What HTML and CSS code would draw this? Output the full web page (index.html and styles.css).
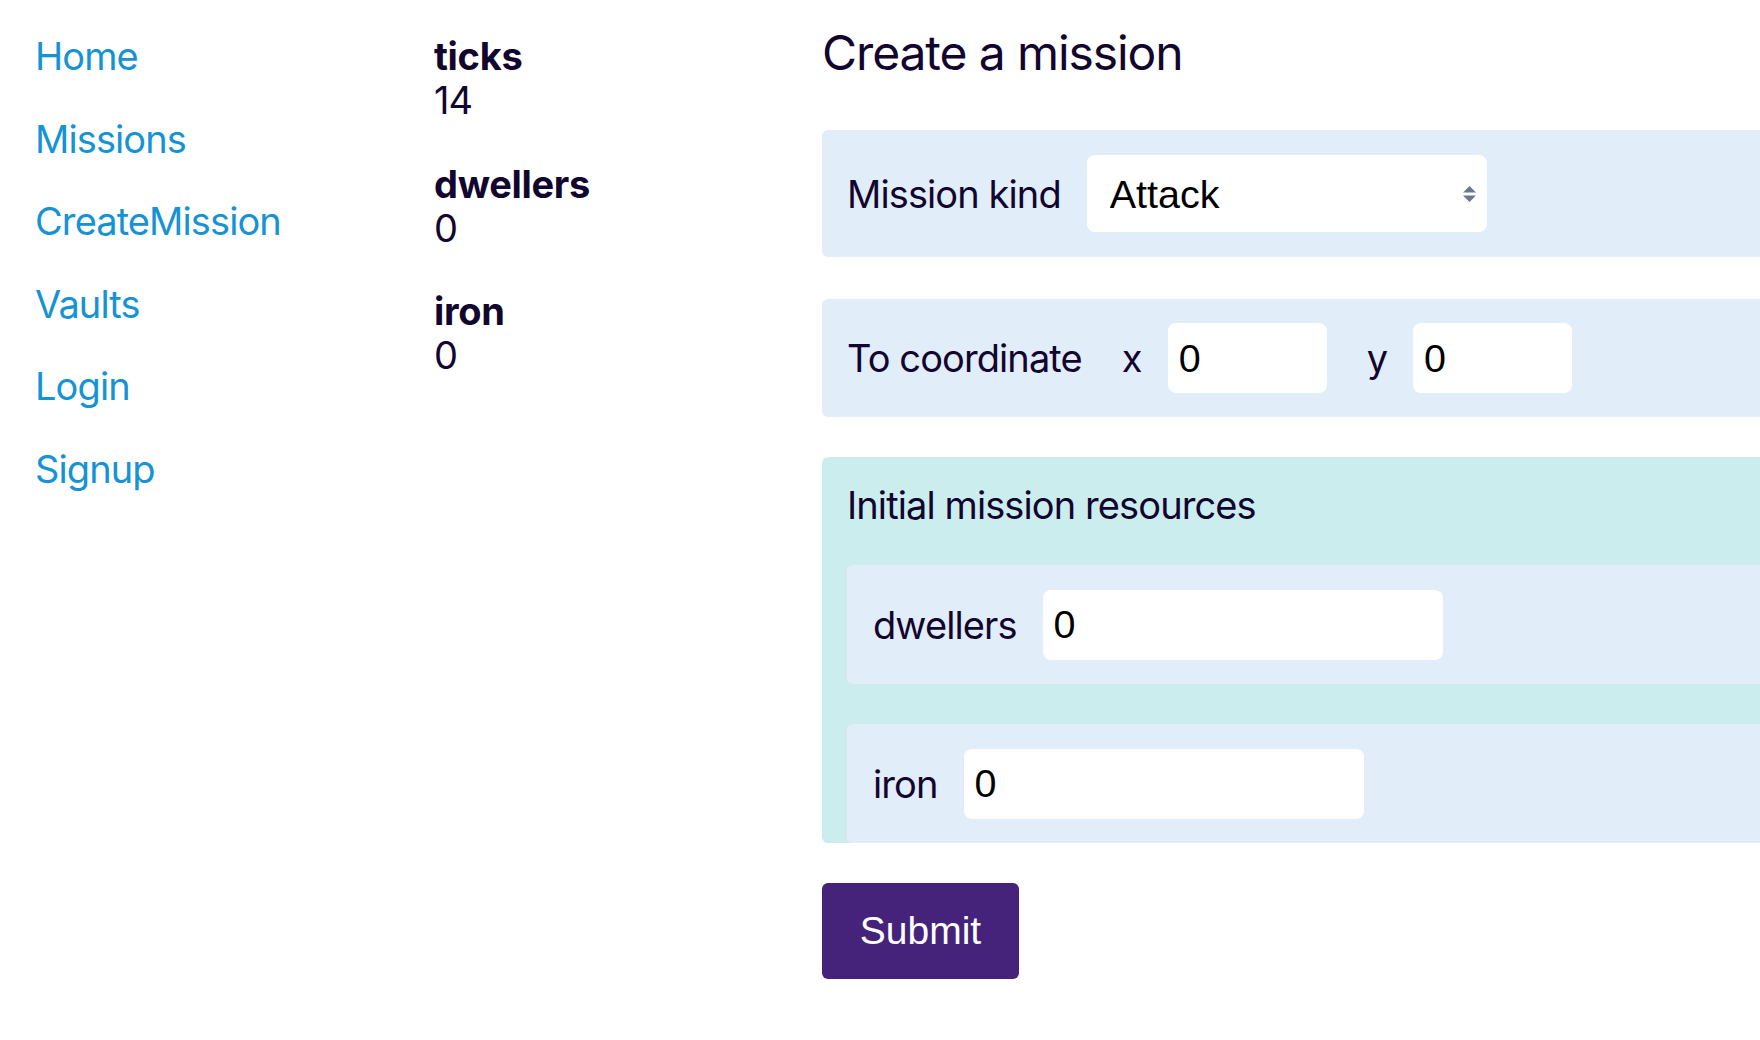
FILE: index.html
```html
<!DOCTYPE html>
<html lang="en">
<head>
<meta charset="utf-8">
<title>Create a mission</title>
<link rel="stylesheet" href="styles.css">
</head>
<body>
<div class="page">
  <nav class="nav">
    <a href="#">Home</a>
    <a href="#">Missions</a>
    <a href="#">CreateMission</a>
    <a href="#">Vaults</a>
    <a href="#">Login</a>
    <a href="#">Signup</a>
  </nav>
  <dl class="stats">
    <div class="stat"><dt>ticks</dt><dd>14</dd></div>
    <div class="stat"><dt>dwellers</dt><dd>0</dd></div>
    <div class="stat"><dt>iron</dt><dd>0</dd></div>
  </dl>
  <main class="main">
    <h1 class="title">Create a mission</h1>
    <form class="form">
      <div class="box row">
        <label class="label">Mission kind</label>
        <div class="select-wrap">
          <select class="select">
            <option>Attack</option>
          </select>
          <svg class="select-arrow" width="13" height="17" viewBox="0 0 13 17"><path d="M6.5 0 L13 6.5 L0 6.5 Z M0 9.5 L13 9.5 L6.5 16 Z" fill="#6b7890"/></svg>
        </div>
      </div>
      <div class="box row coords">
        <label class="label">To coordinate</label>
        <div class="pair">
          <span class="label">x</span>
          <input class="input small" type="text" value="0">
        </div>
        <div class="pair">
          <span class="label">y</span>
          <input class="input small" type="text" value="0">
        </div>
      </div>
      <fieldset class="resources">
        <div class="res-title">Initial mission resources</div>
        <div class="box inner row">
          <label class="label">dwellers</label>
          <input class="input wide" type="text" value="0">
        </div>
        <div class="box inner row">
          <label class="label">iron</label>
          <input class="input wide" type="text" value="0">
        </div>
      </fieldset>
      <button class="submit" type="button">Submit</button>
    </form>
  </main>
</div>
</body>
</html>
```
FILE: styles.css
```css
html, body {
  margin: 0;
  padding: 0;
  overflow: hidden;
  background: #ffffff;
}
body {
  font-family: Inter, "Noto Sans", sans-serif;
  font-size: 38px;
  letter-spacing: -0.9px;
  color: #12052e;
}
.page {
  display: flex;
  align-items: flex-start;
  padding-left: 35px;
  width: 2000px;
}
.nav {
  width: 399px;
  flex: 0 0 399px;
  display: flex;
  flex-direction: column;
  gap: 39.5px;
  margin-top: 35px;
}
.nav a {
  color: #1693d4;
  text-decoration: none;
  line-height: 43px;
  height: 43px;
}
.stats {
  width: 388px;
  flex: 0 0 388px;
  margin: 35px 0 0 0;
  display: flex;
  flex-direction: column;
  gap: 40px;
}
.stat dt {
  font-weight: 700;
  line-height: 43px;
  letter-spacing: -0.3px;
}
.stat dd {
  margin: 0;
  line-height: 44.5px;
}
.main {
  flex: 0 0 1100px;
  margin-top: 23.5px;
}
.title {
  margin: 0 0 48.5px 0;
  font-size: 48px;
  font-weight: 400;
  line-height: 58px;
  letter-spacing: -1.1px;
}
.form {
  margin: 0;
}
.box {
  background: #e1edf9;
  border-radius: 6px;
}
.row {
  display: flex;
  align-items: center;
  gap: 26px;
  padding: 25px 25px;
}
.label {
  line-height: 46px;
  white-space: nowrap;
}
.select-wrap {
  position: relative;
  width: 400px;
  height: 77px;
}
.select {
  appearance: none;
  -webkit-appearance: none;
  width: 400px;
  height: 77px;
  border: none;
  border-radius: 8px;
  background: #ffffff;
  font-family: "Liberation Sans", Arial, sans-serif;
  font-size: 39.5px;
  letter-spacing: 0;
  color: #000;
  padding: 0 23px;
  margin: 0;
}
.select-arrow {
  position: absolute;
  right: 11px;
  top: 31px;
}
.coords {
  padding: 24px 25px;
  margin-top: 42px;
  gap: 40px;
}
.pair {
  display: flex;
  align-items: center;
  gap: 26px;
}
.input {
  height: 70px;
  border: none;
  border-radius: 8px;
  background: #ffffff;
  font-family: "Liberation Sans", Arial, sans-serif;
  font-size: 39.5px;
  letter-spacing: 0;
  color: #000;
  padding: 0 11px;
  margin: 0;
  box-sizing: border-box;
  outline: none;
}
.small {
  width: 159px;
}
.wide {
  width: 400px;
}
.resources {
  margin: 40px 0 0 0;
  border: none;
  background: #ccedee;
  border-radius: 6px;
  padding: 25px 0 0 25px;
  display: flex;
  flex-direction: column;
}
.res-title {
  line-height: 46px;
  margin-bottom: 37px;
}
.inner {
  padding: 24.5px 26px;
  margin-bottom: 40px;
}
.inner:last-child {
  margin-bottom: 0;
}
.submit {
  margin-top: 40px;
  width: 197px;
  height: 96px;
  border: none;
  border-radius: 6px;
  background: #46237a;
  color: #ffffff;
  font-family: "Liberation Sans", Arial, sans-serif;
  font-size: 39px;
  letter-spacing: 0;
  padding: 0;
}
```
